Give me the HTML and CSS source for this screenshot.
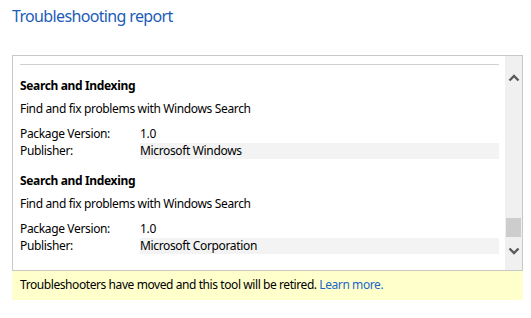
FILE: index.html
```html
<!DOCTYPE html>
<html lang="en">
<head>
  <meta charset="UTF-8" />
  <title>Troubleshooting report</title>
  <link rel="stylesheet" href="styles.css">
</head>
<body>
  <h1 class="title">Troubleshooting report</h1>

  <!-- Report list -->
  <div class="report-box">
    <div class="report-content">
      <hr class="separator" />

      <div class="package">
        <div class="package-name">Search and Indexing</div>
        <div class="package-desc">Find and fix problems with Windows Search</div>
        <div class="package-row">
          <span class="label">Package Version:</span>
          <span class="value">1.0</span>
        </div>
        <div class="package-row">
          <span class="label">Publisher:</span>
          <span class="value shaded">Microsoft Windows</span>
        </div>
      </div>

      <div class="package">
        <div class="package-name">Search and Indexing</div>
        <div class="package-desc">Find and fix problems with Windows Search</div>
        <div class="package-row">
          <span class="label">Package Version:</span>
          <span class="value">1.0</span>
        </div>
        <div class="package-row">
          <span class="label">Publisher:</span>
          <span class="value shaded">Microsoft Corporation</span>
        </div>
      </div>
    </div>

    <div class="scrollbar">
      <div class="scroll-arrow">
        <svg width="12" height="8" viewBox="0 0 12 8"><polyline points="1.5,6.5 6,2 10.5,6.5" fill="none" stroke="#5a5a5a" stroke-width="2.4"/></svg>
      </div>
      <div class="scroll-track">
        <div class="scroll-thumb"></div>
      </div>
      <div class="scroll-arrow">
        <svg width="12" height="8" viewBox="0 0 12 8"><polyline points="1.5,1.5 6,6 10.5,1.5" fill="none" stroke="#5a5a5a" stroke-width="2.4"/></svg>
      </div>
    </div>
  </div>

  <div class="notice">
    Troubleshooters have moved and this tool will be retired. <a href="#">Learn more.</a>
  </div>
</body>
</html>
```

FILE: styles.css
```css
body {
  margin: 0;
  background: #fff;
  font-family: "Noto Sans", "Open Sans", sans-serif;
  font-size: 12px;
  letter-spacing: -0.35px;
  color: #000;
}

.title {
  margin: 0;
  padding: 5px 0 0 12px;
  height: 55px;
  box-sizing: border-box;
  font-size: 16px;
  font-weight: normal;
  letter-spacing: -0.65px;
  line-height: 22px;
  color: #1c5cb8;
}

.report-box {
  margin-left: 12px;
  width: 511px;
  height: 216px;
  box-sizing: border-box;
  border: 1px solid #c8c8c8;
  display: flex;
  overflow: hidden;
}

.report-content {
  flex: 1;
  padding: 0 6px 0 7px;
  overflow: hidden;
}

.separator {
  margin: 8px 0 0 0;
  border: none;
  border-top: 1px solid #d0d0d0;
}

.package {
  line-height: 16px;
}

.package-name {
  font-weight: bold;
  margin-top: 13px;
}

.package + .package .package-name {
  margin-top: 14px;
}

.package-desc {
  margin-top: 7px;
  margin-bottom: 9px;
}

.package-row {
  display: flex;
  margin-bottom: 1px;
}

.label {
  width: 120px;
}

.value {
  flex: 1;
}

.shaded {
  background: #f3f3f3;
}

.scrollbar {
  width: 17px;
  background: #f0f0f0;
  display: flex;
  flex-direction: column;
}

.scroll-arrow {
  height: 17px;
  display: flex;
  justify-content: center;
  align-items: center;
  margin: 0;
}

.scrollbar .scroll-arrow:first-child {
  margin-top: 13px;
}

.scroll-track {
  flex: 1;
  display: flex;
  flex-direction: column;
  justify-content: flex-end;
}

.scroll-thumb {
  height: 19px;
  margin: 0 1px 5px 1px;
  background: #cdcdcd;
}

.scrollbar .scroll-arrow:last-child {
  margin-bottom: 11px;
}

.notice {
  margin-left: 12px;
  width: 511px;
  height: 29px;
  box-sizing: border-box;
  padding-left: 8px;
  line-height: 28px;
  letter-spacing: -0.42px;
  background: #ffffcc;
}

.notice a {
  color: #1a66c8;
  text-decoration: none;
}
```
